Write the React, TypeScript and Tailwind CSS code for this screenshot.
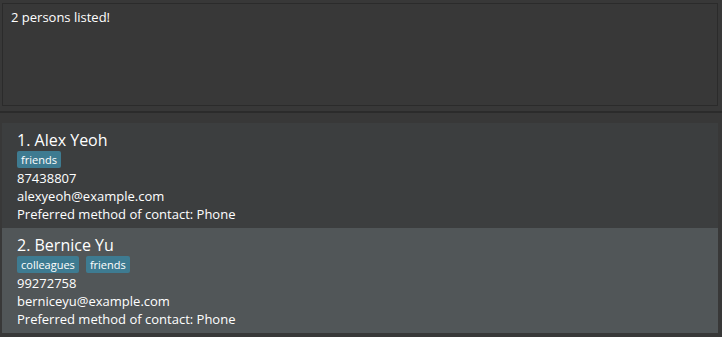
import React from "react";

type Person = { name: string; tags: string[]; phone: string; email: string; pref: string };

const people: Person[] = [
  { name: "Alex Yeoh", tags: ["friends"], phone: "87438807", email: "alexyeoh@example.com", pref: "Phone" },
  { name: "Bernice Yu", tags: ["colleagues", "friends"], phone: "99272758", email: "berniceyu@example.com", pref: "Phone" },
];

function Card({ p, i }: { p: Person; i: number }) {
  return (
    <div className={`h-[105px] pl-[15px] pt-[6px] ${i % 2 === 0 ? "bg-[#3c3e3f]" : "bg-[#515658]"}`}>
      <div className="text-[16px] leading-[22px] text-white">
        {i + 1}. {p.name}
      </div>
      <div className="flex gap-[7px] h-[17px] mb-[1px]">
        {p.tags.map((t) => (
          <span key={t} className="bg-[#3e7b91] rounded-[2px] px-[4px] text-[11px] leading-[17px] text-white">
            {t}
          </span>
        ))}
      </div>
      <div className="text-[13px] leading-[18px] text-white">{p.phone}</div>
      <div className="text-[13px] leading-[18px] text-white">{p.email}</div>
      <div className="text-[13px] leading-[18px] text-white">Preferred method of contact: {p.pref}</div>
    </div>
  );
}

export default function App() {
  return (
    <div className="w-[722px] h-[337px] bg-[#383838] overflow-hidden font-['Open_Sans',sans-serif] text-white">
      <div className="pt-[3px] pl-[2px] pr-[4px]">
        <div className="h-[103px] border border-[#2b2b2b] pl-[8px] pt-[4px] text-[13px] leading-[18px]">
          2 persons listed!
        </div>
      </div>
      <div className="mt-[5px] h-[2px] bg-[#2b2b2b]" />
      <div className="pt-[10px] pl-[2px] pr-[4px]">
        {people.map((p, i) => (
          <Card key={p.name} p={p} i={i} />
        ))}
      </div>
    </div>
  );
}
